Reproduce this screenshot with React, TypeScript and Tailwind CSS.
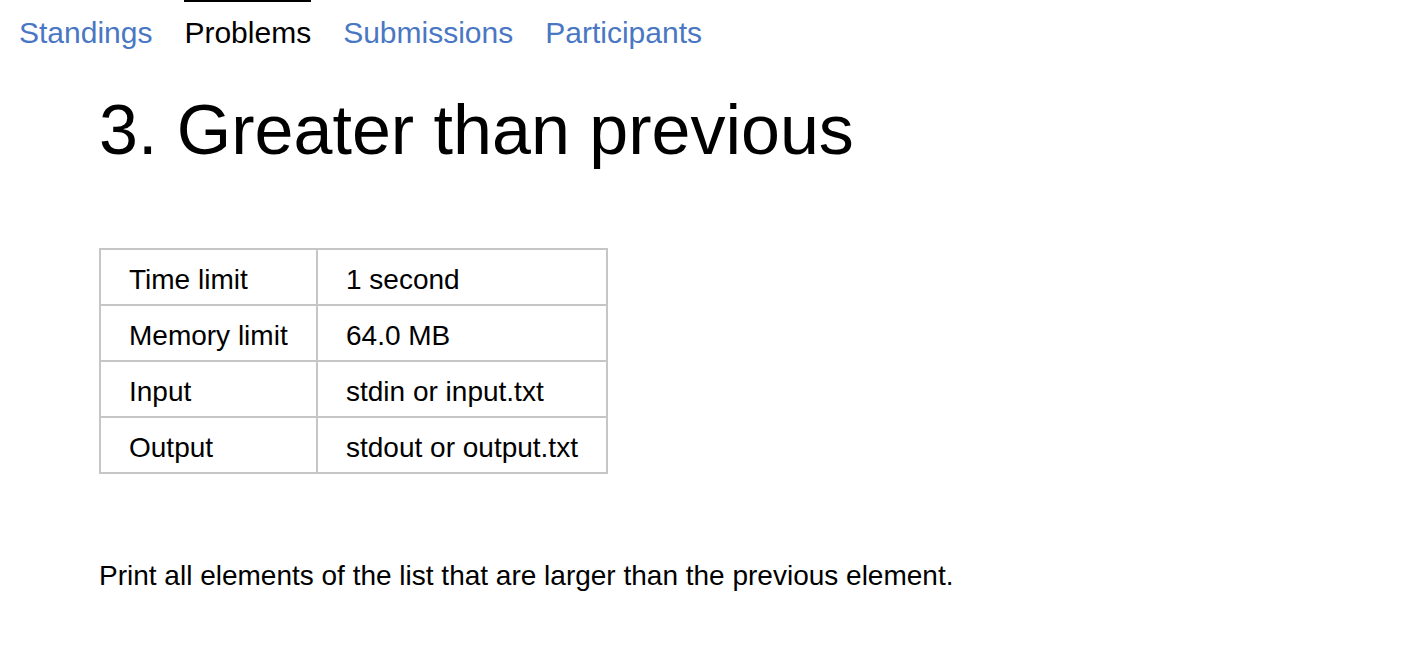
import React from "react";

const tabs = [
  { label: "Standings", active: false },
  { label: "Problems", active: true },
  { label: "Submissions", active: false },
  { label: "Participants", active: false },
];

const limits = [
  ["Time limit", "1 second"],
  ["Memory limit", "64.0 MB"],
  ["Input", "stdin or input.txt"],
  ["Output", "stdout or output.txt"],
];

export default function App() {
  return (
    <div className="min-h-screen bg-white text-black font-['Liberation_Sans',Arial,sans-serif]">
      <nav className="flex pl-[19px] gap-[32px]">
        {tabs.map((t) => (
          <a
            key={t.label}
            href="#"
            className={
              t.active
                ? "border-t-2 border-black pt-[14px] pb-[8px] text-[30px] leading-[34px] text-black"
                : "border-t-2 border-transparent pt-[14px] pb-[8px] text-[30px] leading-[34px] text-[#4a77c3]"
            }
          >
            {t.label}
          </a>
        ))}
      </nav>

      <div className="pl-[99px]">
        <h1 className="mt-[32px] text-[70px] leading-[80px] font-normal">3. Greater than previous</h1>

        <table className="mt-[78px] border-collapse text-[28px] leading-[32px]">
          <tbody>
            {limits.map(([k, v]) => (
              <tr key={k} className="h-[56px]">
                <td className="w-[217px] border-2 border-[#c6c6c6] pt-[5px] pl-[28px] pr-[20px] align-middle">{k}</td>
                <td className="w-[290px] border-2 border-[#c6c6c6] pt-[5px] pl-[28px] pr-[20px] align-middle">{v}</td>
              </tr>
            ))}
          </tbody>
        </table>

        <p className="mt-[86px] text-[28px] leading-[32px]">
          Print all elements of the list that are larger than the previous element.
        </p>
      </div>
    </div>
  );
}
